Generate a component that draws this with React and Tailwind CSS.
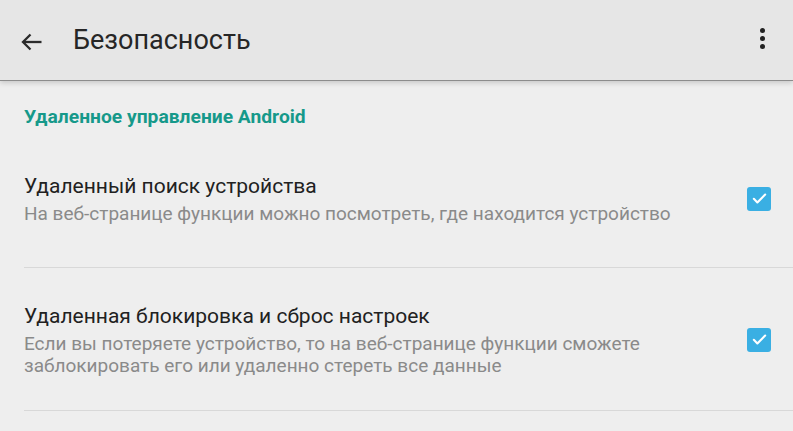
import React from "react";

const CheckIcon = () => (
    <div className="w-6 h-6 rounded-[3px] bg-[#3aafe3] flex items-center justify-center">
        <svg width="17" height="17" viewBox="0 0 24 24" fill="none" stroke="white" strokeWidth="3" strokeLinecap="round" strokeLinejoin="round">
            <path d="M4 12.5l5 5L20 6.5" />
        </svg>
    </div>
);

const SettingRow = ({ title, lines, pad }) => (
    <div className={"flex items-center pl-6 pr-[22px] " + pad}>
        <div className="flex-1">
            <div className="text-[21px] leading-[28px] text-[#212121]">{title}</div>
            <div className="text-[19px] leading-[22px] text-[#8a8a8a] mt-[3px]">
                {lines.map((l, i) => (
                    <div key={i}>{l}</div>
                ))}
            </div>
        </div>
        <CheckIcon />
    </div>
);

const App = () => {
    return (
        <div className="w-[793px] h-[431px] overflow-hidden bg-[#eeeeee] font-['Roboto',sans-serif]">
            <div className="h-[81px] bg-[#e6e6e6] border-b border-[#8c8c8c] flex items-center relative z-10 shadow-[0_2px_5px_rgba(0,0,0,0.16)]">
                <div className="w-[73px] pl-[20px] mt-[3px]">
                    <svg width="22" height="18" viewBox="0 0 22 18" fill="none" stroke="#2b2b2b" strokeWidth="2.3">
                        <path d="M21.5 9H3" />
                        <path d="M10.5 1.5L3 9l7.5 7.5" />
                    </svg>
                </div>
                <div className="flex-1 text-[27px] leading-[32px] text-[#262626]">Безопасность</div>
                <div className="w-[58px] flex flex-col items-center gap-[3px] pr-[3px] -mt-[4px]">
                    <div className="w-[5px] h-[5px] rounded-full bg-[#222]" />
                    <div className="w-[5px] h-[5px] rounded-full bg-[#222]" />
                    <div className="w-[5px] h-[5px] rounded-full bg-[#222]" />
                </div>
            </div>
            <div className="pl-6 pt-[25px] text-[19.25px] font-bold text-[#16998a] leading-[22px]">
                Удаленное управление Android
            </div>
            <SettingRow
                pad="pt-[44px] pb-[42px]"
                title="Удаленный поиск устройства"
                lines={["На веб-странице функции можно посмотреть, где находится устройство"]}
            />
            <div className="ml-6 border-t border-[#d8d8d8]" />
            <SettingRow
                pad="pt-[34px] pb-[33px]"
                title="Удаленная блокировка и сброс настроек"
                lines={[
                    "Если вы потеряете устройство, то на веб-странице функции сможете",
                    "заблокировать его или удаленно стереть все данные",
                ]}
            />
            <div className="ml-6 border-t border-[#d8d8d8]" />
        </div>
    );
};

export default App;
